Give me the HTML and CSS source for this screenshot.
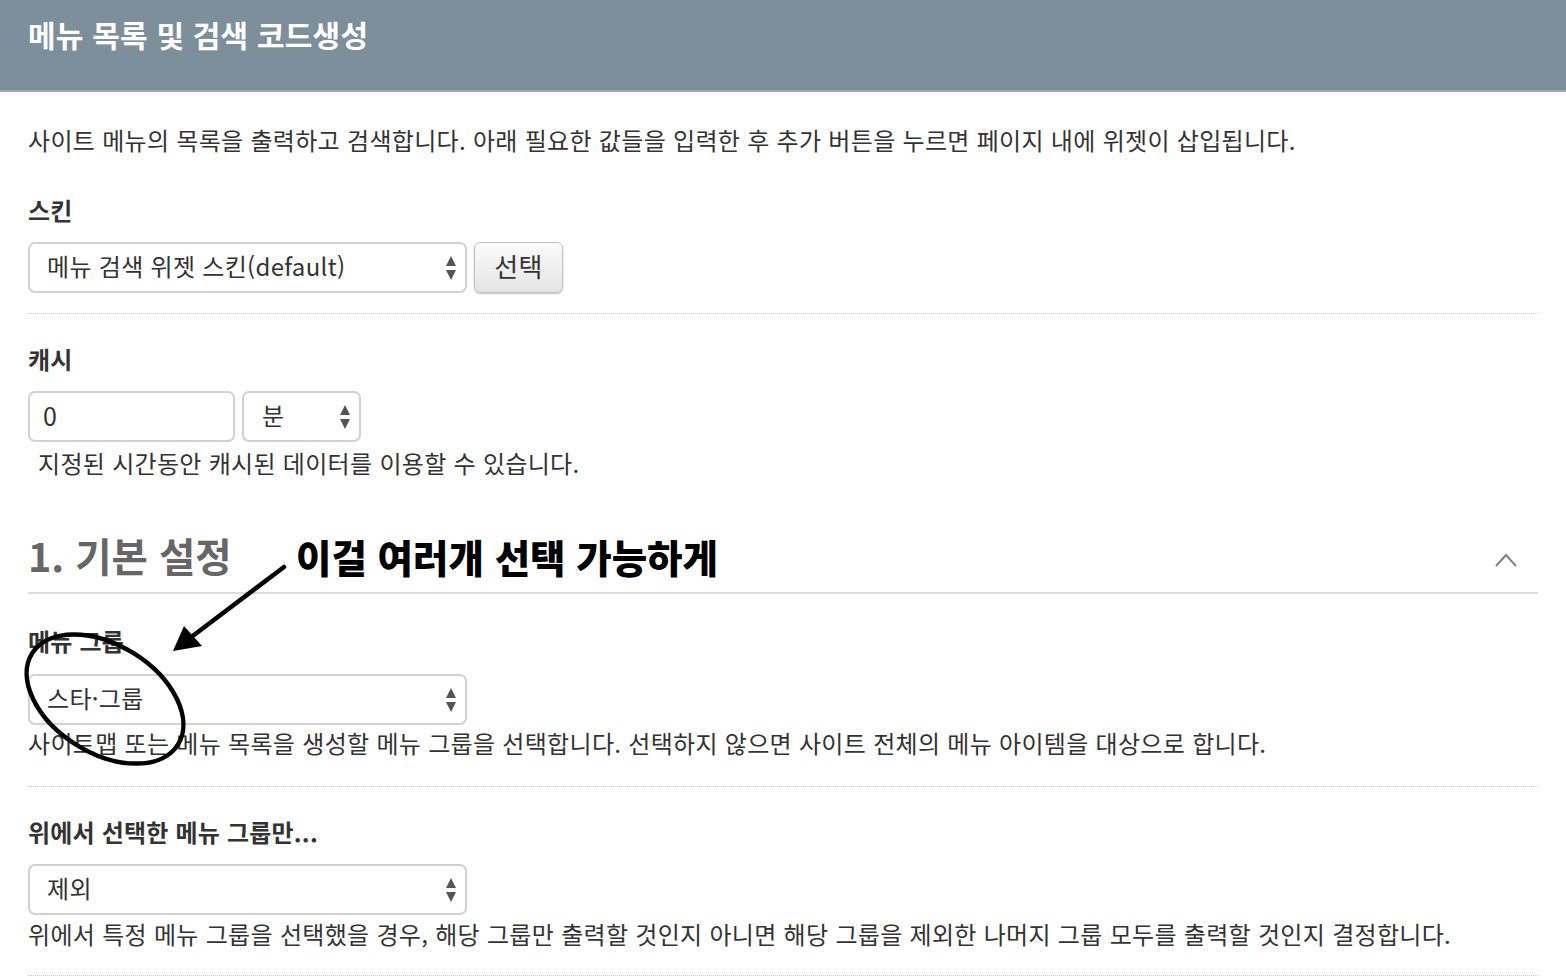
FILE: index.html
```html
<!DOCTYPE html>
<html lang="ko">
<head>
<meta charset="utf-8">
<title>메뉴 목록 및 검색 코드생성</title>
<link rel="stylesheet" href="styles.css">
</head>
<body>
<div class="page">
  <header class="header"><h1>메뉴 목록 및 검색 코드생성</h1></header>
  <main class="content">
    <p class="desc">사이트 메뉴의 목록을 출력하고 검색합니다. 아래 필요한 값들을 입력한 후 추가 버튼을 누르면 페이지 내에 위젯이 삽입됩니다.</p>

    <section class="field field-skin">
      <div class="label">스킨</div>
      <div class="row">
        <div class="select wide"><span>메뉴 검색 위젯 스킨(default)</span>
          <svg class="arrows" width="12" height="26" viewBox="0 0 12 26"><path d="M6 1 L11 11 L1 11 Z M1 15 L11 15 L6 25 Z" fill="#555"/></svg>
        </div>
        <button class="btn">선택</button>
      </div>
    </section>

    <section class="field field-cache">
      <div class="label">캐시</div>
      <div class="row">
        <div class="input">0</div>
        <div class="select small"><span>분</span>
          <svg class="arrows" width="12" height="26" viewBox="0 0 12 26"><path d="M6 1 L11 11 L1 11 Z M1 15 L11 15 L6 25 Z" fill="#555"/></svg>
        </div>
      </div>
      <p class="help indent">지정된 시간동안 캐시된 데이터를 이용할 수 있습니다.</p>
    </section>

    <div class="section-head">
      <h2>1. 기본 설정</h2>
      <svg class="chevron" width="24" height="16" viewBox="0 0 24 16"><polyline points="2,14 12,3 22,14" fill="none" stroke="#808080" stroke-width="2"/></svg>
    </div>

    <section class="field field-group">
      <div class="label">메뉴 그룹</div>
      <div class="select wide"><span>스타·그룹</span>
        <svg class="arrows" width="12" height="26" viewBox="0 0 12 26"><path d="M6 1 L11 11 L1 11 Z M1 15 L11 15 L6 25 Z" fill="#555"/></svg>
      </div>
      <p class="help">사이트맵 또는 메뉴 목록을 생성할 메뉴 그룹을 선택합니다. 선택하지 않으면 사이트 전체의 메뉴 아이템을 대상으로 합니다.</p>
    </section>

    <section class="field field-only">
      <div class="label">위에서 선택한 메뉴 그룹만...</div>
      <div class="select wide"><span>제외</span>
        <svg class="arrows" width="12" height="26" viewBox="0 0 12 26"><path d="M6 1 L11 11 L1 11 Z M1 15 L11 15 L6 25 Z" fill="#555"/></svg>
      </div>
      <p class="help">위에서 특정 메뉴 그룹을 선택했을 경우, 해당 그룹만 출력할 것인지 아니면 해당 그룹을 제외한 나머지 그룹 모두를 출력할 것인지 결정합니다.</p>
    </section>
  </main>

  <div class="note">이걸 여러개 선택 가능하게</div>
  <svg class="overlay" width="1566" height="978" viewBox="0 0 1566 978">
    <line x1="284" y1="567" x2="190" y2="638" stroke="#000" stroke-width="4.5" stroke-linecap="round"/>
    <polygon points="173,651 184,626 202,646" fill="#000"/>
    <ellipse cx="105" cy="699" rx="86" ry="54" transform="rotate(32 105 699)" fill="none" stroke="#000" stroke-width="4.5"/>
  </svg>
</div>
</body>
</html>
```

FILE: styles.css
```css
* { box-sizing: border-box; }
html, body { margin: 0; padding: 0; background: #fff; }
body {
  font-family: "Noto Sans CJK KR", "Noto Sans", sans-serif;
  color: #333;
  width: 1566px;
  height: 978px;
  overflow: hidden;
}
.page { position: relative; width: 1566px; height: 978px; }

.header {
  height: 92px;
  background: #7d8f9b;
  border-bottom: 2px solid #a4a8ab;
  padding: 12px 28px 0;
}
.header h1 {
  margin: 0;
  color: #fff;
  font-size: 30px;
  font-weight: 700;
  line-height: 44px;
  letter-spacing: 0.2px;
}

.content { padding: 0 28px; }

.desc {
  margin: 31px 0 0;
  font-size: 24px;
  line-height: 34px;
  letter-spacing: 0.3px;
}

.field { border-bottom: 1px dotted #c8c8c8; }
.label {
  font-size: 24px;
  font-weight: 700;
  line-height: 34px;
  letter-spacing: 0.2px;
  color: #333;
}
.row { display: flex; gap: 7px; }

.field-skin { margin-top: 36px; padding-bottom: 20px; }
.field-skin .label { margin-bottom: 15px; }

.field-cache { margin-top: 28px; border-bottom: none; }
.field-cache .label { margin-bottom: 15px; }

.select {
  position: relative;
  height: 51px;
  border: 2px solid #d2d2d2;
  border-radius: 7px;
  background: #fff;
  display: flex;
  align-items: center;
  padding: 0 17px 4px;
  font-size: 24px;
  letter-spacing: 0.3px;
  color: #333;
}
.select.wide { width: 439px; }
.select.small { width: 119px; padding-left: 18px; }
.select .arrows { position: absolute; right: 8px; top: 11px; }

.input {
  width: 207px;
  height: 51px;
  border: 2px solid #d2d2d2;
  border-radius: 7px;
  display: flex;
  align-items: center;
  padding: 0 13px 4px;
  font-size: 25px;
  color: #333;
}

.btn {
  width: 89px;
  height: 51px;
  border: 1px solid #c2c2c2;
  border-radius: 6px;
  background: linear-gradient(#fbfbfb, #e4e4e4);
  box-shadow: 0 1px 2px rgba(0,0,0,0.25);
  font-family: inherit;
  font-size: 26px;
  color: #333;
  padding: 0 0 5px;
  letter-spacing: 0.3px;
}

.help {
  margin: 0;
  font-size: 24px;
  line-height: 34px;
  letter-spacing: 0.3px;
  color: #333;
}
.help.indent { padding-left: 10px; margin-top: 4px; }

.section-head {
  margin-top: 50px;
  display: flex;
  align-items: center;
  justify-content: space-between;
  border-bottom: 2px solid #dcdcdc;
  padding-bottom: 12px;
}
.section-head h2 {
  margin: 0;
  font-size: 39.5px;
  font-weight: 700;
  line-height: 50px;
  color: #666;
  letter-spacing: 0;
}
.chevron { margin-right: 20px; margin-top: 10px; }

.field-group { margin-top: 30px; padding-bottom: 26px; }
.field-group .label { margin-bottom: 16px; }
.field-group .help { margin-top: 1px; }

.field-only { margin-top: 28px; padding-bottom: 24px; }
.field-only .label { margin-bottom: 15px; }
.field-only .help { margin-top: 2px; }

.note {
  position: absolute;
  left: 296px;
  top: 531px;
  font-size: 38.5px;
  font-weight: 900;
  line-height: 50px;
  color: #000;
  letter-spacing: 0;
}
.overlay { position: absolute; left: 0; top: 0; pointer-events: none; }
```
